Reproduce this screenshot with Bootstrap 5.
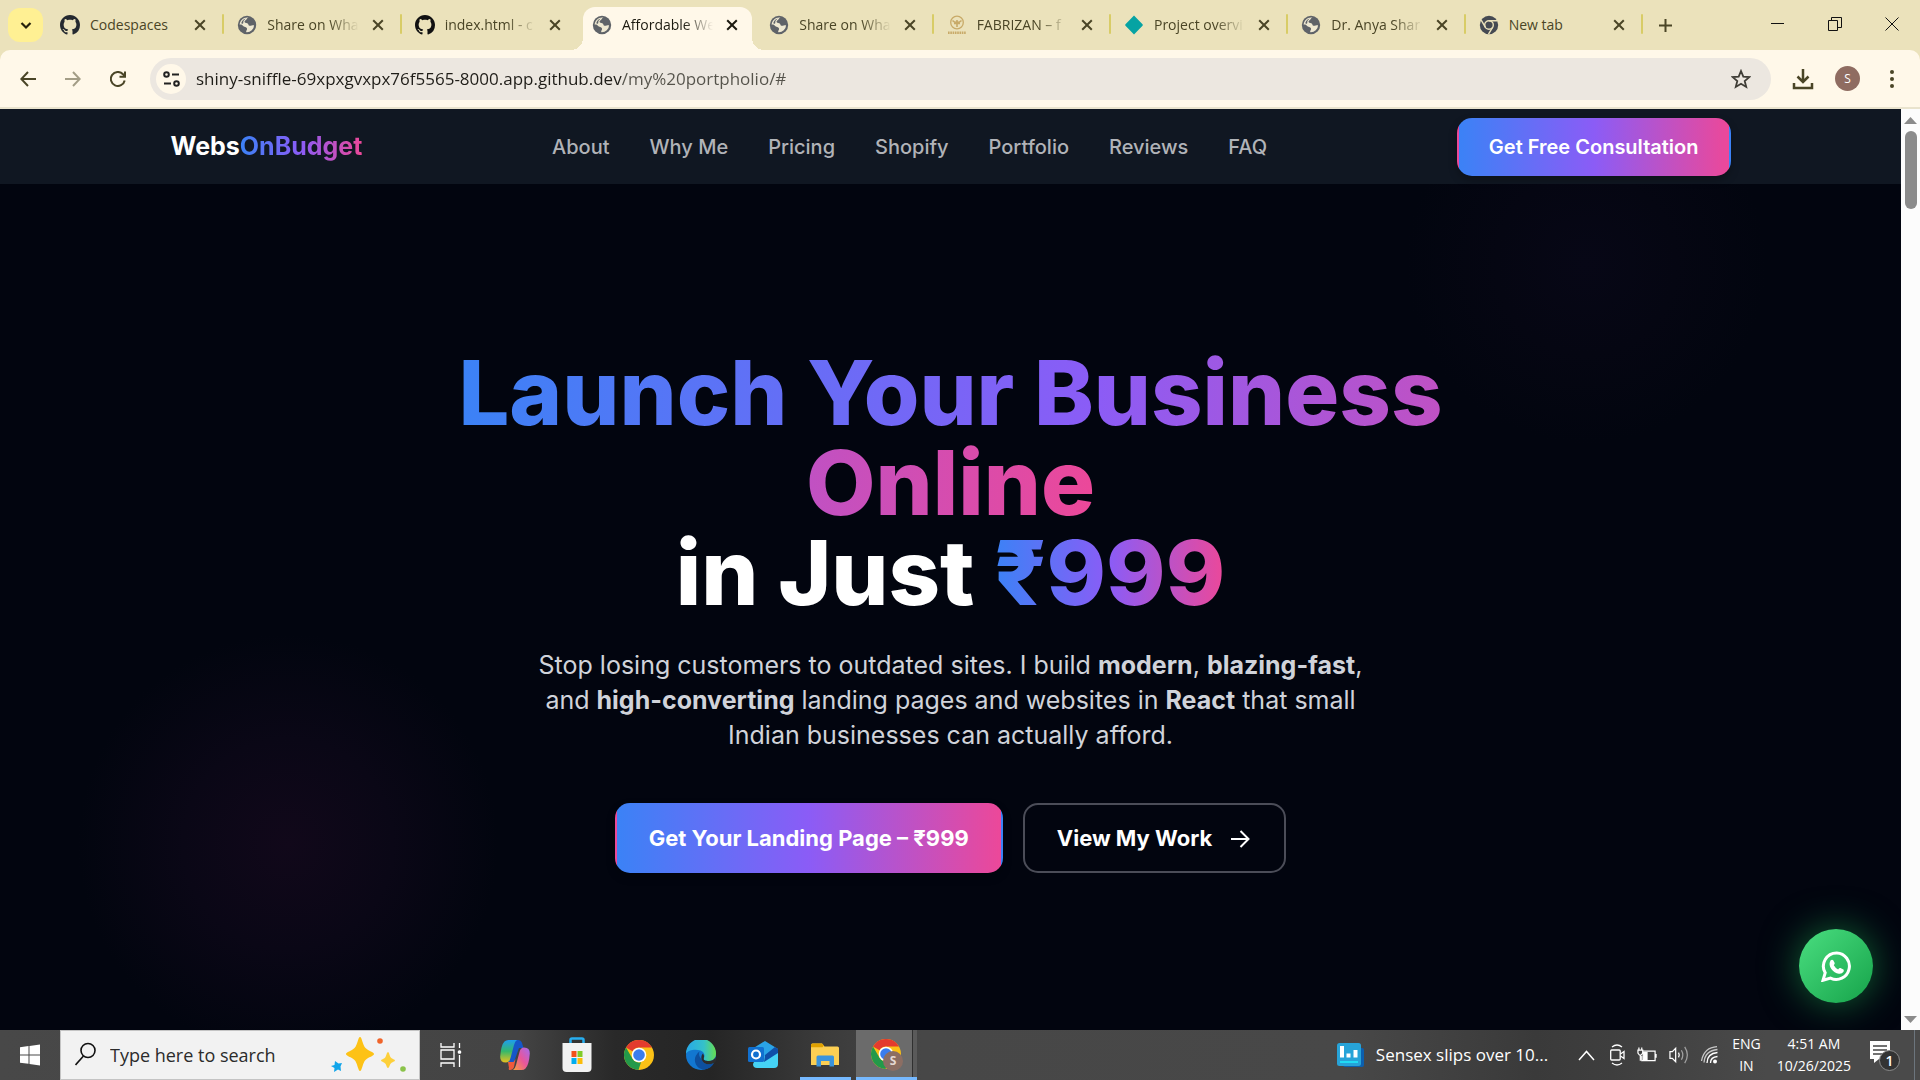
<!DOCTYPE html>
<html lang="en">
<head>
<meta charset="utf-8">
<meta name="viewport" content="width=device-width, initial-scale=1">
<title>Affordable Websites – WebsOnBudget</title>
<link href="https://cdn.jsdelivr.net/npm/bootstrap@5.3.0/dist/css/bootstrap.min.css" rel="stylesheet">
<style>
:root{--strip:#ebe2bb;--bar:#fff8e9;--ink:#4a4526;--grad:linear-gradient(to right,#3b82f6,#8b5cf6,#ec4899)}
body{height:100vh;overflow:hidden;background:#02050f;font-family:"Open Sans","Noto Sans",sans-serif}
svg{display:block;flex:none}
button{font-family:inherit}
.plain{border:0;background:none;padding:0;display:flex;align-items:center;justify-content:center;color:inherit;flex:none}

/* tab strip */
.strip{background:var(--strip);height:50px;color:var(--ink);padding-left:8px}
.tab-menu{width:35px;height:34px;border-radius:12px;background:#fff093;margin-right:4px;color:#26220c}
.tabs{flex:0 1 1596px}
.btab{flex:1 1 0;min-width:0;position:relative;height:50px;padding:0 17px 0 13px;gap:10px}
.btab::after{content:"";position:absolute;right:0;top:14px;width:2px;height:20px;background:#d8cc66;border-radius:2px}
.btab.no-sep::after{display:none}
.btab a{flex:1 1 0;min-width:0;overflow:hidden;white-space:nowrap;font-size:14px;line-height:20px;color:inherit;text-decoration:none}
.btab.long a{-webkit-mask-image:linear-gradient(to right,#000 66%,transparent 98%);mask-image:linear-gradient(to right,#000 66%,transparent 98%)}
.btab svg,.btab a,.btab button{position:relative;z-index:1}
.tab-shape{position:absolute;left:4px;right:4px;top:7px;bottom:0;background:var(--bar);border-radius:12px 12px 0 0}
.tab-shape::before,.tab-shape::after{content:"";position:absolute;bottom:0;width:12px;height:12px}
.tab-shape::before{right:100%;background:radial-gradient(circle at 0 0,transparent 12px,var(--bar) 12px)}
.tab-shape::after{left:100%;background:radial-gradient(circle at 100% 0,transparent 12px,var(--bar) 12px)}
.btab.current{color:#1c1a10}
.wctl{width:57px;height:48px;color:#111}

/* toolbar */
.toolbar{background:var(--strip)}
.toolbar-in{background:var(--bar);border-radius:10px 10px 0 0;height:59px;border-bottom:2px solid #e9e3cd;color:var(--ink);padding:0 12px}
.tbtn{width:32px;height:32px;margin-right:13px}
.omni{height:42px;border-radius:21px;background:#ece7e0;padding:0 20px 0 6px;margin-left:3px;color:#3f3d36}
.site-info{width:30px;height:30px;border-radius:50%;background:var(--bar);color:#222;margin-right:10px}
.omni input{font-size:17px;line-height:24px;border:0;outline:0;padding:0;min-width:0;color:transparent;background:linear-gradient(to right,#1f1d18 426px,#55534b 426px);-webkit-background-clip:text;background-clip:text}
.avatar{width:25px;height:25px;border-radius:50%;background:#8f6c61;color:#fff;font-size:12px;line-height:25px}

/* site */
.site{font-family:Inter,sans-serif;background:#02050f;overflow:hidden;position:relative}
.site-nav{background:#101722;height:75px}
.wrap{max-width:1600px;padding:0 20px}
.brand{font-size:25px;line-height:35px;font-weight:700;color:#fff;text-decoration:none}
.grad-text{background:var(--grad);-webkit-background-clip:text;background-clip:text;color:transparent}
.menu{gap:40px}
.menu a{font-size:20px;line-height:30px;font-weight:500;color:#b1b3b8;text-decoration:none}
.cta{border:2px solid transparent;border-radius:15px;background-image:var(--grad);color:#fff;font-weight:600;box-shadow:0 4px 8px #0004}
.cta-sm{height:58px;padding:0 30px;font-size:20px}
.cta-lg{height:70px;padding:0 32px;font-size:22px;font-weight:700}
.cta-line{background:none;border-color:#4b4d58;box-shadow:none}
.cta-row{gap:20px}
.hero{padding-top:7px;position:relative;background:
 radial-gradient(circle 210px at 288px 660px,#11081a 0,#0a0716 50%,transparent 100%),
 radial-gradient(circle 180px at calc(100% - 315px) 80px,#070716 0,#050612 50%,transparent 100%)}
.hero h1{font-size:90px;line-height:90px;font-weight:800;max-width:1120px;color:#fff;margin-bottom:30px}
.hero p{font-size:25px;line-height:35px;max-width:840px;color:#d0d3da;margin-bottom:50px}
.hero p strong{font-weight:700}
.fab{position:absolute;right:28px;bottom:27px;width:74px;height:74px;border-radius:50%;background:linear-gradient(135deg,#4ade80,#16a34a);box-shadow:0 0 38px #22c55e80}
.sbar{width:19px;background:#fcfcfc;padding:8px 0 7px;color:#8b8b8b}
.thumb{width:12px;height:78px;border-radius:6px;background:#8b8b8b;margin-top:7px}

/* taskbar */
.taskbar{height:50px;color:#fff;background:linear-gradient(to right,#484848 0,#444 27%,#292929 32%,#252525 37%,#3b3b3b 43%,#474747 48%,#484848 70%,#3a3a3a 80%,#3e3e3e 84%,#4a4a4a 92%,#4a4a4a 100%)}
.start-btn{width:60px}
.tsearch{width:360px;background:#f2f2f2;border:1px solid #c4c4c4;padding:0 12px 2px 14px;color:#111}
.tsearch input{font-size:18px;line-height:24px;border:0;outline:0;background:none;min-width:0;padding:0;margin:2px 0 0 14px}
.tsearch input::placeholder{color:#2b2b2b;opacity:1}
.tapp{width:62px}
.task-view{margin-right:2px}
.tapp.open{position:relative}
.tapp.open::after{content:"";position:absolute;left:6px;right:5px;bottom:0;height:3px;background:#76b9ff}
.tapp.front{width:61px;background:linear-gradient(to right,#6b6b6b 56px,#303030 56px 57px,#5a5a5a 57px)}
.tapp.front::after{left:0;right:0}
.news{font-size:17px;line-height:24px;gap:12px;margin-right:30px}
.tray-icons{gap:12px;margin-right:14px}
.tray-text{font-size:14px;line-height:22px}
.notify{margin:0 13px 0 19px}
.peek{width:6px;height:50px}
</style>
</head>
<body class="d-flex flex-column">
<svg width="0" height="0" class="position-absolute" aria-hidden="true">
 <defs>
  <symbol id="gh" viewBox="0 0 16 16"><path fill="currentColor" d="M8 0C3.58 0 0 3.58 0 8c0 3.54 2.29 6.53 5.47 7.59.4.07.55-.17.55-.38 0-.19-.01-.82-.01-1.49-2.01.37-2.53-.49-2.69-.94-.09-.23-.48-.94-.82-1.13-.28-.15-.68-.52-.01-.53.63-.01 1.08.58 1.23.82.72 1.21 1.87.87 2.33.66.07-.52.28-.87.51-1.07-1.78-.2-3.64-.89-3.64-3.95 0-.87.31-1.59.82-2.15-.08-.2-.36-1.02.08-2.12 0 0 .67-.21 2.2.82.64-.18 1.32-.27 2-.27s1.36.09 2 .27c1.53-1.04 2.2-.82 2.2-.82.44 1.1.16 1.92.08 2.12.51.56.82 1.27.82 2.15 0 3.07-1.87 3.75-3.65 3.95.29.25.54.73.54 1.48 0 1.07-.01 1.93-.01 2.2 0 .21.15.46.55.38A8.01 8.01 0 0 0 16 8c0-4.42-3.58-8-8-8"/></symbol>
  <symbol id="globe" viewBox="0 0 20 20"><circle cx="10" cy="10" r="9.2" fill="#5f6368"/><path fill="#efe9d2" d="M11.5 2.6c-1.8.3-1.300 1.600-2.600 2.300-1 .6-1.700 1.200-1.200 2.300.500 1.200 2.600.600 3.300 1.500.700.900.300 1.800 1.500 2 1.400.200 2.600-.600 4.600-.5a7.300 7.300 0 0 1-7.600 7c-.700-.4-.200-1.600.300-2.300.500-.8.400-1.900-.6-2.500-1.300-.7-2.200-.3-3-1.300C5.400 10 4.300 9.300 2.700 9.700c.2-4 3.600-7.700 8.800-7.100z"/><path fill="#5f6368" d="M4.200 8.300C5 5.600 6.800 4.200 8.900 3.600 8 4.400 7 5 6.500 6c-.5 1 .2 2.300-.7 2.800-.5.200-1.100-.2-1.600-.5z"/></symbol>
  <symbol id="x" viewBox="0 0 14 14"><path d="M2.200 2.200l9.600 9.600M11.800 2.200l-9.600 9.600" stroke="currentColor" stroke-width="2" fill="none"/></symbol>
  <symbol id="chrome" viewBox="0 0 30 30"><circle cx="15" cy="15" r="15" fill="#fbc116"/><path fill="#e33b2e" d="M2 7.500A15 15 0 0 1 28 7.500H15a7.500 7.500 0 0 0-6.500 3.700z"/><path fill="#23994a" d="M2 7.500l6.500 11.300a7.500 7.500 0 0 0 6.500 3.700q1 0 2-.2L14.500 30A15 15 0 0 1 2 7.500z"/><circle cx="15" cy="15" r="7.300" fill="#fff"/><circle cx="15" cy="15" r="5.800" fill="#3b7ded"/></symbol>
 </defs>
</svg>

<header>
 <div class="strip d-flex">
  <button class="plain tab-menu align-self-start mt-2" aria-label="Search tabs"><svg width="12" height="12" viewBox="0 0 12 12"><path d="M1.500 4l4.500 4.500L10.500 4" fill="none" stroke="currentColor" stroke-width="2.200"/></svg></button>
  <nav class="tabs d-flex" aria-label="Browser tabs">
   <div class="btab d-flex align-items-center"><svg width="20" height="20" color="#24292f"><use href="#gh"/></svg><a href="#">Codespaces</a><button class="plain" aria-label="Close"><svg width="14" height="14"><use href="#x"/></svg></button></div>
   <div class="btab long d-flex align-items-center"><svg width="20" height="20"><use href="#globe"/></svg><a href="#">Share on Wha</a><button class="plain" aria-label="Close"><svg width="14" height="14"><use href="#x"/></svg></button></div>
   <div class="btab long no-sep d-flex align-items-center"><svg width="20" height="20" color="#111"><use href="#gh"/></svg><a href="#">index.html - c</a><button class="plain" aria-label="Close"><svg width="14" height="14"><use href="#x"/></svg></button></div>
   <div class="btab long no-sep current d-flex align-items-center"><span class="tab-shape"></span><svg width="20" height="20"><use href="#globe"/></svg><a href="#">Affordable We</a><button class="plain" aria-label="Close"><svg width="14" height="14"><use href="#x"/></svg></button></div>
   <div class="btab long d-flex align-items-center"><svg width="20" height="20"><use href="#globe"/></svg><a href="#">Share on Wha</a><button class="plain" aria-label="Close"><svg width="14" height="14"><use href="#x"/></svg></button></div>
   <div class="btab long d-flex align-items-center"><svg width="20" height="20" viewBox="0 0 20 20" fill="none" stroke="#c8aa68"><circle cx="10" cy="7.500" r="6.300" stroke-width="1.300"/><path d="M5.500 5.500q3 3 4.500 1 1.500 2 4.500-1M7 8.500h6M10 5v7" stroke-width="1.600"/><path d="M1 17.800h18" stroke-width="2.400" stroke-dasharray="1.600 .700"/></svg><a href="#">FABRIZAN – f</a><button class="plain" aria-label="Close"><svg width="14" height="14"><use href="#x"/></svg></button></div>
   <div class="btab long d-flex align-items-center"><svg width="20" height="20" viewBox="0 0 20 20"><path d="M10 .5l8.500 8.700q.8.800 0 1.600L10 19.500 1.500 10.800q-.8-.8 0-1.600z" fill="#06a3a3"/></svg><a href="#">Project overvi</a><button class="plain" aria-label="Close"><svg width="14" height="14"><use href="#x"/></svg></button></div>
   <div class="btab long d-flex align-items-center"><svg width="20" height="20"><use href="#globe"/></svg><a href="#">Dr. Anya Shar</a><button class="plain" aria-label="Close"><svg width="14" height="14"><use href="#x"/></svg></button></div>
   <div class="btab d-flex align-items-center"><svg width="20" height="20" viewBox="0 0 20 20" fill="none"><circle cx="10" cy="10" r="9.200" fill="#454a52"/><circle cx="10" cy="10" r="4.300" stroke="#ebe2bb" stroke-width="1.400"/><path d="M10 5.700h8.500M6.300 12.200L2.200 5.200M13.700 12.200l-4.200 7" stroke="#ebe2bb" stroke-width="1.400"/></svg><a href="#">New tab</a><button class="plain" aria-label="Close"><svg width="14" height="14"><use href="#x"/></svg></button></div>
  </nav>
  <button class="plain ms-3" aria-label="New tab"><svg width="13" height="13" viewBox="0 0 13 13"><path d="M6.500 0v13M0 6.500h13" stroke="currentColor" stroke-width="2"/></svg></button>
  <div class="d-flex ms-auto">
   <button class="plain wctl" aria-label="Minimize"><svg width="13" height="13"><path d="M0 5.500h13" stroke="currentColor"/></svg></button>
   <button class="plain wctl" aria-label="Restore"><svg width="14" height="14" viewBox="0 0 14 14" fill="none" stroke="currentColor"><path d="M.5 3.500h9v10h-9zM3.500 3V.5h10v10H10"/></svg></button>
   <button class="plain wctl" aria-label="Close window"><svg width="14" height="14"><path d="M.5.5l13 13M13.500.5l-13 13" stroke="currentColor"/></svg></button>
  </div>
 </div>
 <div class="toolbar">
  <div class="toolbar-in d-flex align-items-center">
   <button class="plain tbtn" aria-label="Back"><svg width="16" height="16" viewBox="0 0 16 16"><path d="M16 8H1.500M8 1L1.300 8 8 15" fill="none" stroke="currentColor" stroke-width="2"/></svg></button>
   <button class="plain tbtn opacity-50" aria-label="Forward"><svg width="16" height="16" viewBox="0 0 16 16"><path d="M0 8h14.500M8 1l6.700 7L8 15" fill="none" stroke="currentColor" stroke-width="2"/></svg></button>
   <button class="plain tbtn" aria-label="Reload"><svg width="16" height="16" viewBox="0 0 16 16"><path d="M14.700 9.500A7 7 0 1 1 13 3.200L14.500 5M15 .500v5.300H9.500" fill="none" stroke="currentColor" stroke-width="2"/></svg></button>
   <form class="omni d-flex align-items-center flex-grow-1">
    <button type="button" class="plain site-info" aria-label="Site information"><svg width="17" height="16" viewBox="0 0 17 16" fill="none" stroke="currentColor" stroke-width="2"><circle cx="3.500" cy="3.500" r="2.300"/><path d="M9 3.500h7M1 12.500h7"/><circle cx="13.500" cy="12.500" r="2.300"/></svg></button>
    <input type="text" class="flex-grow-1" aria-label="Address" value="shiny-sniffle-69xpxgvxpx76f5565-8000.app.github.dev/my%20portpholio/#">
    <button type="button" class="plain" aria-label="Bookmark"><svg width="20" height="20" viewBox="0 0 20 20"><path d="M10 2l2.300 5.600 6 .5-4.600 3.900 1.500 5.900L10 14.700 4.800 17.900l1.500-5.900L1.700 8.100l6-.5z" fill="none" stroke="currentColor" stroke-width="1.800"/></svg></button>
   </form>
   <button class="plain tbtn ms-3 me-3" aria-label="Downloads"><svg width="22" height="22" viewBox="0 0 22 22" fill="none" stroke="currentColor" stroke-width="2.500"><path d="M11 1v13M5.500 8.500L11 14l5.500-5.500M2 15v5h18v-5"/></svg></button>
   <button class="plain avatar me-3" aria-label="Profile">S</button>
   <button class="plain tbtn me-0" aria-label="Menu"><svg width="4" height="18" viewBox="0 0 4 18" fill="currentColor"><circle cx="2" cy="2" r="2"/><circle cx="2" cy="9" r="2"/><circle cx="2" cy="16" r="2"/></svg></button>
  </div>
 </div>
</header>

<div class="d-flex flex-grow-1 overflow-hidden">
 <div class="site flex-grow-1 d-flex flex-column">
  <nav class="site-nav">
   <div class="wrap mx-auto h-100 d-flex align-items-center justify-content-between">
    <a class="brand" href="#">Webs<span class="grad-text">OnBudget</span></a>
    <div class="menu d-flex">
     <a href="#">About</a><a href="#">Why Me</a><a href="#">Pricing</a><a href="#">Shopify</a><a href="#">Portfolio</a><a href="#">Reviews</a><a href="#">FAQ</a>
    </div>
    <button class="cta cta-sm">Get Free Consultation</button>
   </div>
  </nav>
  <main class="hero flex-grow-1 d-flex flex-column align-items-center justify-content-center text-center">
   <h1><span class="grad-text">Launch Your Business Online</span><br>in Just <span class="grad-text">₹999</span></h1>
   <p>Stop losing customers to outdated sites. I build <strong>modern</strong>, <strong>blazing-fast</strong>, and <strong>high-converting</strong> landing pages and websites in <strong>React</strong> that small Indian businesses can actually afford.</p>
   <div class="cta-row d-flex justify-content-center">
    <button class="cta cta-lg">Get Your Landing Page – ₹999</button>
    <button class="cta cta-lg cta-line d-flex align-items-center">View My Work<svg class="ms-3" width="24" height="24" viewBox="0 0 24 24" fill="none" stroke="currentColor" stroke-width="2"><path d="M3 13h17M12.500 5l8 8-8 8"/></svg></button>
   </div>
  </main>
  <button class="plain fab" aria-label="Chat on WhatsApp"><svg width="31" height="31" viewBox="0 0 31 31"><path d="M15.700 2A13.200 13.200 0 0 0 4.200 21.800L2 29.300l7.500-2.200A13.200 13.200 0 1 0 15.700 2z" fill="none" stroke="#fff" stroke-width="3"/><path d="M9.500 9.500q1.500-1.400 2.700-.3l1.500 2.700q.2.900-.9 2.300 1.700 3 4.300 4.200 1.300-1.600 2.300-1.300l3.100 1.500q.6.700 0 2.200-1.500 2.400-4.700 2-4.500-.9-7.500-4.900-2.900-4.200-.8-8.400z" fill="#fff"/></svg></button>
 </div>
 <div class="sbar d-flex flex-column align-items-center">
  <svg width="13" height="7"><path d="M0 7L6.500 0 13 7z" fill="currentColor"/></svg>
  <div class="thumb"></div>
  <svg class="mt-auto" width="13" height="7"><path d="M0 0l6.500 7L13 0z" fill="currentColor"/></svg>
 </div>
</div>

<footer class="taskbar d-flex">
 <button class="plain start-btn" aria-label="Start"><svg width="20" height="24" viewBox="0 0 20 24" fill="#fff"><path d="M0 4.200l8.500-1.100v8.300H0zM9.500 3L20 1.500v9.900H9.500zM0 12.500h8.500v8.300L0 19.700zM9.500 12.500H20v9.900L9.500 21z"/></svg></button>
 <label class="tsearch d-flex align-items-center">
  <svg width="21" height="24" viewBox="0 0 21 24" fill="none" stroke="#111" stroke-width="1.600"><circle cx="13" cy="8.500" r="7"/><path d="M8.500 14L.5 23"/></svg>
  <input type="text" class="flex-grow-1" placeholder="Type here to search" aria-label="Search">
  <svg width="76" height="38" viewBox="0 0 76 38"><path fill="#fdc216" d="M29 2c2 0 2.500 8 5.500 11S43 17 43 19s-5.500 3-8.500 6S31 36 29 36s-2.500-8-5.500-11S15 21 15 19s5.500-3 8.500-6S27 2 29 2z"/><path fill="#fdd03a" d="M57 17c1.200 0 1.500 4 2.800 5.500S64 24.500 64 25.500 61 27 59.800 28.500 58.200 33 57 33s-1.500-3-2.800-4.500-4.200-2-4.200-3 3-1.500 4.200-3S55.800 17 57 17z"/><path fill="#11a5ea" d="M4 26l3.500 2.500L11 28l-1.500 3.500L10 36l-3-1.500L3 37l.500-4L0 31l3.500-1z"/><circle cx="49" cy="6" r="2.800" fill="#f0642a"/><circle cx="72" cy="34" r="2.800" fill="#8bc34a"/></svg>
 </label>
 <button class="plain tapp task-view" aria-label="Task view"><svg width="22" height="24" viewBox="0 0 22 24" fill="none" stroke="#fff" stroke-width="1.300"><path d="M1 0v4h13V0M1 7h13v9H1zM1 24v-4h13v4M19.500 0v5M19.500 12v12"/><circle cx="19.500" cy="9" r="1.200" fill="#fff"/></svg></button>
 <button class="plain tapp" aria-label="Copilot"><svg width="30" height="30" viewBox="0 0 30 30"><defs><linearGradient id="c1" x1="0" y1="0" x2="0" y2="1"><stop offset="0" stop-color="#1e9df0"/><stop offset=".5" stop-color="#35b86b"/><stop offset="1" stop-color="#e9c21d"/></linearGradient><linearGradient id="c2" x1="1" y1="0" x2="0" y2="1"><stop offset="0" stop-color="#a36cf0"/><stop offset=".5" stop-color="#e8569a"/><stop offset="1" stop-color="#f9a13b"/></linearGradient></defs><path fill="#1656c8" d="M9 0h9q3 0 4 3l1.500 5H19L14 22H8z"/><path fill="url(#c1)" d="M8.500 0H17q-2 1-3 5l-3.500 13q-1 4.500-4.500 4.500-6 0-5.800-6Q1 5 4.500 1.500 6 0 8.500 0z"/><path fill="url(#c2)" d="M21.500 30H13q2-1 3-5l3.500-13q1-4.500 4.500-4.500 6 0 5.800 6-.8 11.500-4.300 15-1.500 1.500-4 1.500z"/><path fill="#ef5a3c" d="M8 22h5.500l2-3-1.500 8q-1 3-4 3-2 0-1-2z"/></svg></button>
 <button class="plain tapp" aria-label="Microsoft Store"><svg width="30" height="36" viewBox="0 0 30 36"><path d="M8.500 7V3q0-1.500 1.500-1.500h10q1.500 0 1.500 1.500v4" fill="none" stroke="#27aef0" stroke-width="2.500"/><path d="M.500 6h29v25q0 4-4 4h-21q-4 0-4-4z" fill="#f2f2f2"/><path fill="#f1511b" d="M9.500 14h5v6h-5z"/><path fill="#80cc28" d="M15.500 14h5v6h-5z"/><path fill="#00adef" d="M9.500 21h5v6h-5z"/><path fill="#fbbc09" d="M15.500 21h5v6h-5z"/></svg></button>
 <button class="plain tapp" aria-label="Chrome"><svg width="30" height="30"><use href="#chrome"/></svg></button>
 <button class="plain tapp" aria-label="Edge"><svg width="30" height="30" viewBox="0 0 30 30"><defs><linearGradient id="e1"><stop offset="0" stop-color="#27a8e8"/><stop offset=".6" stop-color="#35c1c9"/><stop offset="1" stop-color="#66dd50"/></linearGradient></defs><circle cx="15" cy="15" r="15" fill="#1277d0"/><path fill="url(#e1)" d="M0 14A15 15 0 0 1 30 13.500c0 5-3.500 7.500-7.500 7.500-3 0-5.500-1-4.700-2.800 1.300-2 1-6.200-3.300-7.700C9 9 2 10 0 14z"/><path fill="#0d4f9e" d="M10 15.500c-3 5 0 13.500 8 14.200 5-.7 8-3.200 10-6.700-5 2.500-11 1.500-12.500-4C13.500 17.500 12 13 14 11q-2.500 1.500-4 4.500z"/><path fill="#2c2c2c" d="M17.800 18.200c-.8 1.800 1.700 2.800 4.700 2.800 3.500 0 6-1.500 7-4l.5 4-2 2c-5 2.500-11 1.500-12.500-4-.5-2.500.3-4.500 1.500-5.500q1.500 2 .8 4.700z"/></svg></button>
 <button class="plain tapp" aria-label="Outlook"><svg width="30" height="28" viewBox="0 0 30 28"><path d="M4 8L17 0l13 8v4L12 18 4 14z" fill="#2aa3e6"/><path d="M30 8v15q0 4-4 4H9q-4 0-4-4l1-2z" fill="#45d3f5"/><path d="M17 14L27 6l3 2v4l-14 9z" fill="#0f4fa8"/><rect y="6" width="16" height="15" rx="1.500" fill="#1170d0"/><circle cx="8" cy="13.500" r="4" fill="none" stroke="#fff" stroke-width="2.200"/></svg></button>
 <button class="plain tapp open" aria-label="File Explorer"><svg width="28" height="24" viewBox="0 0 28 24"><path d="M0 2q0-1.500 1.500-1.500H11l2.500 3H26.500q1.500 0 1.500 1.500v17H0z" fill="#fccf53"/><path d="M0 2q0-1.500 1.500-1.500H11l2 2-1.500 1.700H0z" fill="#e0a100"/><path d="M5.500 23.500V14q0-1.500 1.500-1.500h14.500q1.500 0 1.500 1.500v9.500h-4.500V18H10v5.500z" fill="#3b94dc"/></svg></button>
 <button class="plain tapp open front" aria-label="Chrome, S"><svg width="32" height="32" viewBox="0 0 32 32"><use href="#chrome" width="30" height="30"/><circle cx="22" cy="22" r="10" fill="#8c6e63"/><text x="22" y="26" text-anchor="middle" font-size="12" font-weight="700" fill="#e6d9d4">S</text></svg></button>

 <div class="ms-auto d-flex align-items-center">
  <div class="news d-flex align-items-center"><svg width="27" height="24" viewBox="0 0 27 24"><rect x="6" y="5" width="21" height="19" rx="2" fill="#0c5fae"/><rect width="24" height="23" rx="2.500" fill="#27a3d8"/><path d="M5 3v11.500M11.500 10.500v4M18.500 7v7.500" stroke="#fff" stroke-width="4" fill="none"/><path d="M3 19h18" stroke="#20dbf5" stroke-width="2"/></svg><span>Sensex slips over 10...</span></div>
  <div class="tray-icons d-flex align-items-center">
   <svg width="20" height="11" viewBox="0 0 20 11"><path d="M1 10l7.500-8.500L16 10" fill="none" stroke="#fff" stroke-width="1.500"/></svg>
   <svg width="15" height="22" viewBox="0 0 15 22" fill="none" stroke="#fff" stroke-width="1.300"><rect x=".7" y="6" width="9.500" height="10" rx="1"/><path d="M10.500 10l3.500-2.500v7L10.500 12M2 3q5-4 10 0M2 19q5 4 10 0"/></svg>
   <svg width="20" height="16" viewBox="0 0 21 16" fill="none" stroke="#fff" stroke-width="1.300"><path d="M6 4h13v10H5V9M20 7v4M1 3h5v3l-1.500 2H2.500L1 6zM2 0v3M5 0v3M3.500 8v6"/><path d="M6.500 5.500h4v7h-4z" fill="#fff"/></svg>
   <svg width="20" height="22" viewBox="0 0 21 22" fill="none" stroke="#fff" stroke-width="1.300"><path d="M1 7.500h2.500L7 4v14l-3.500-3.500H1zM10 8.500q1.500 2.500 0 5"/><path d="M13 6q3 5 0 10M16.500 2.500q5.500 8.500 0 17" opacity=".5"/></svg>
   <svg width="17" height="18" viewBox="0 0 17 18" fill="none" stroke="#fff" stroke-width="1.300"><circle cx="14" cy="15.500" r="2" fill="#fff" stroke="none"/><path d="M9.500 17q0-6 7-6.500M6 17q0-9.500 10.500-10.500"/><path d="M3 16.500Q4 4.500 16.500 3.500M.500 15Q3 1.500 16 .700" opacity=".7"/></svg>
  </div>
  <div class="tray-text text-center me-3">ENG<br>IN</div>
  <div class="tray-text text-center">4:51 AM<br>10/26/2025</div>
  <button class="plain notify" aria-label="Notifications, 1 new"><svg width="31" height="34" viewBox="0 0 31 34"><path d="M0 3h20v18H9l-5 4v-4H0z" fill="#fff"/><path d="M3 8h14M3 12h14M3 16h10" stroke="#444" stroke-width="1.300"/><circle cx="19.500" cy="22.500" r="10" fill="#333" stroke="#8a8a8a"/><text x="19.500" y="27.500" text-anchor="middle" font-size="14" font-weight="600" fill="#fff">1</text></svg></button>
  <div class="peek border-start border-secondary"></div>
 </div>
</footer>
<script src="https://cdn.jsdelivr.net/npm/bootstrap@5.3.0/dist/js/bootstrap.bundle.min.js"></script>
</body>
</html>
